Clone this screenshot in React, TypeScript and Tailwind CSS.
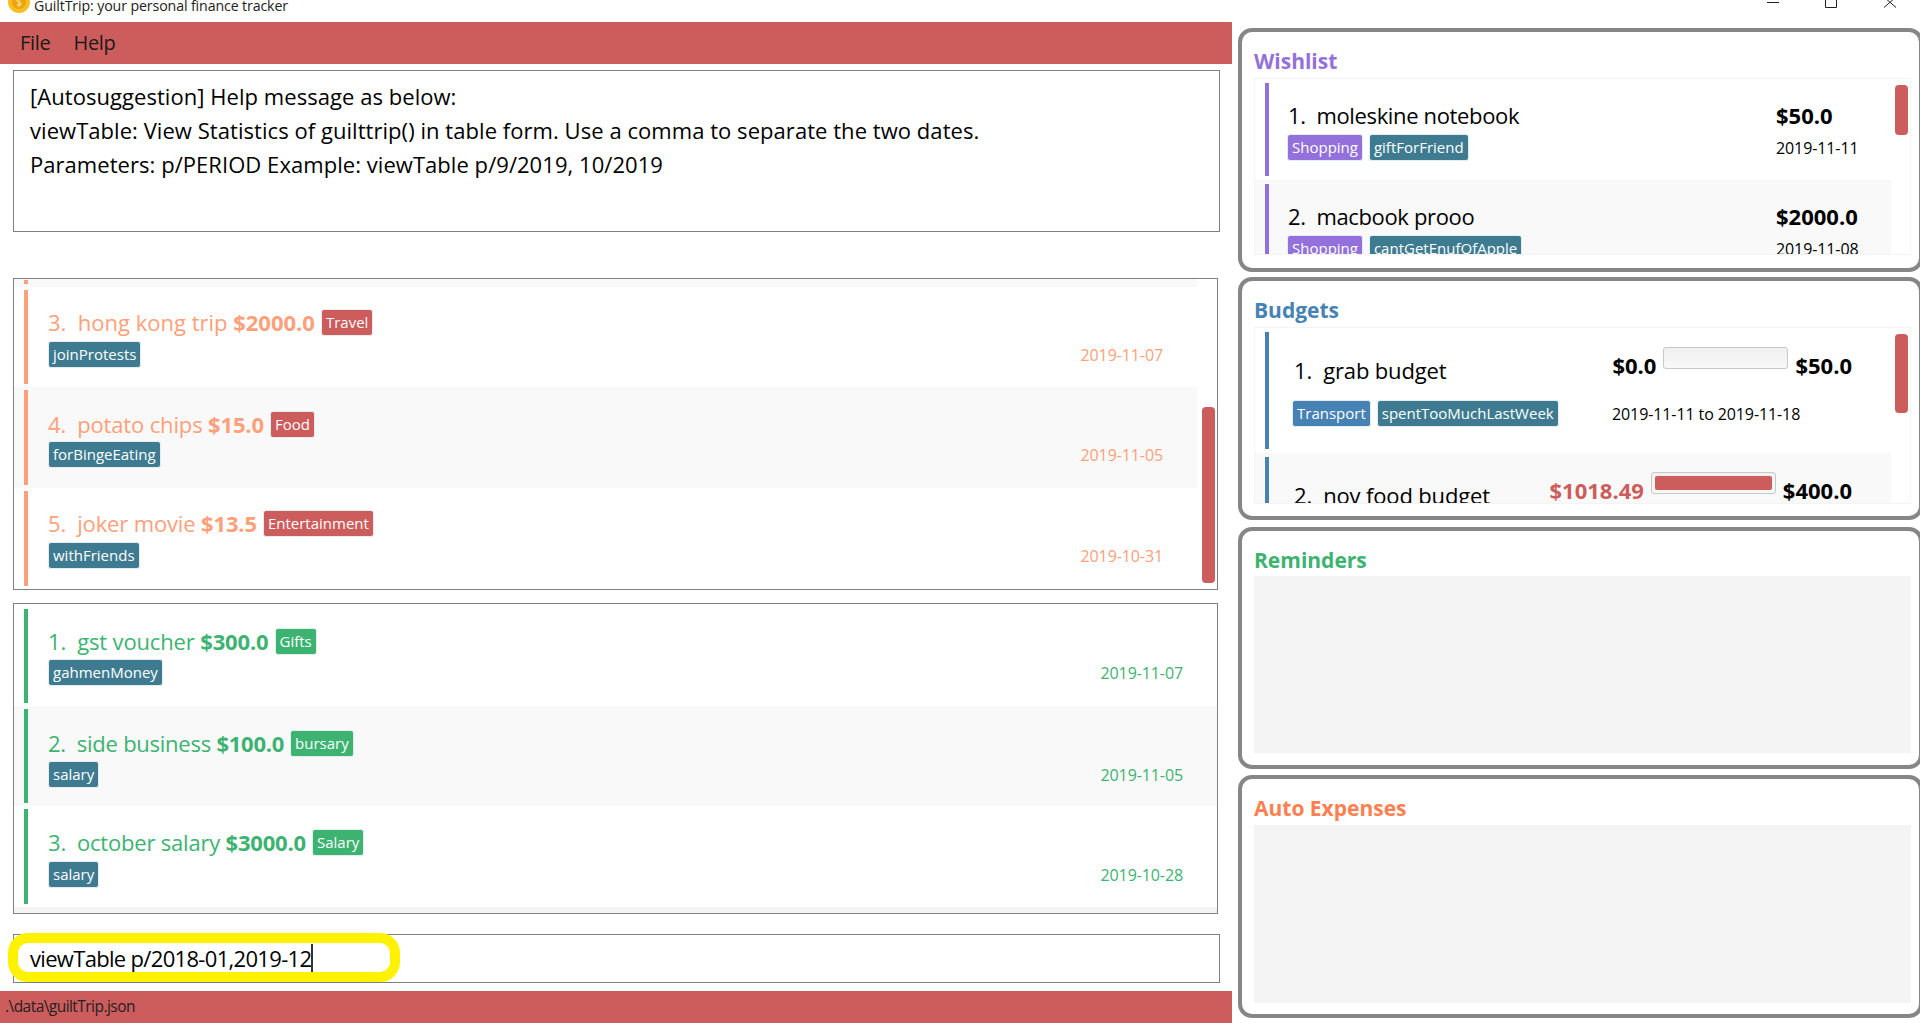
import React from "react";

const FONT = "font-['Open_Sans','Noto_Sans',sans-serif]";

function Tag({ text, color = "bg-[#3e7b91]" }: { text: string; color?: string }) {
  return (
    <span className={`${color} inline-flex h-[27px] items-center rounded-[3px] border border-[#e4edf0] px-[4px] text-[15px] whitespace-nowrap text-white`}>
      {text}
    </span>
  );
}

type TxProps = {
  n: string; name: string; price: string; cat: string; catColor: string; tag: string; date: string;
  text: string; bar: string; alt?: boolean; h: string; pt: string; mt: string; track?: string;
};

function TxRow({ n, name, price, cat, catColor, tag, date, text, bar, alt, h, pt, mt, track = "" }: TxProps) {
  return (
    <div className={`flex ${h} ${alt ? "bg-[#f9f9f9]" : "bg-white"} ${text}`}>
      <div className={`${bar} my-[3px] ml-[10px] w-[4px]`} />
      <div className={`ml-[20px] flex flex-1 flex-col pr-[34px] ${pt}`}>
        <div className="flex h-[30px] items-center gap-[6px]">
          <span className={`text-[22px] whitespace-pre ${track}`}>{n}.  {name} <b>{price}</b></span>
          <Tag text={cat} color={catColor} />
        </div>
        <div className={`flex items-center justify-between ${mt}`}>
          <Tag text={tag} />
          <span className="text-[16px] tracking-[-0.1px]">{date}</span>
        </div>
      </div>
    </div>
  );
}

function Panel({ title, color, className, children }: { title: string; color: string; className: string; children: React.ReactNode }) {
  return (
    <section className={`flex w-[685px] flex-col rounded-[14px] border-4 border-[#868686] bg-white pr-[8px] pl-[12px] ${className}`}>
      <h2 className={`mt-[15px] h-[28px] text-[21px] leading-[28px] font-bold ${color}`}>{title}</h2>
      {children}
    </section>
  );
}

function Thumb({ className }: { className: string }) {
  return <div className={`absolute rounded-[4px] bg-[#cd5c5c] ${className}`} />;
}

function WishRow({ n, name, price, tag, date, alt }: { n: string; name: string; price: string; tag: string; date: string; alt?: boolean }) {
  return (
    <div className={`flex h-[101px] shrink-0 ${alt ? "bg-[#f9f9f9]" : "bg-white"}`}>
      <div className="my-[4px] ml-[10px] w-[4px] bg-[#9370db]" />
      <div className="ml-[19px] flex flex-1 flex-col pt-[21px] pr-[31px]">
        <div className="flex h-[30px] items-center justify-between text-[22px]">
          <span className="tracking-[-0.35px] whitespace-pre">{n}.  {name}</span>
          <b className="w-[84px] whitespace-nowrap">{price}</b>
        </div>
        <div className="mt-[4px] flex items-center justify-between">
          <div className="-ml-[1px] flex gap-[6px]">
            <Tag text="Shopping" color="bg-[#9370db]" />
            <Tag text={tag} />
          </div>
          <span className="w-[84px] text-[16px] tracking-[-0.1px] whitespace-nowrap">{date}</span>
        </div>
      </div>
    </div>
  );
}

function Progress({ fill }: { fill?: boolean }) {
  return (
    <div className="h-[22px] w-[125px] rounded-[3px] border border-[#c8c8c8] bg-gradient-to-b from-[#f0f0f0] to-[#f8f8f8] p-[3px]">
      {fill && <div className="h-full w-full rounded-[2px] bg-[#cd5c5c]" />}
    </div>
  );
}

export default function App() {
  const expense = { text: "text-[#ffa07a]", bar: "bg-[#ffa07a]", catColor: "bg-[#cd5c5c]" };
  const income = { text: "text-[#3cb371]", bar: "bg-[#3cb371]", catColor: "bg-[#3cb371]" };
  const tight = "tracking-[-0.15px]";
  return (
    <div className={`h-[1023px] w-[1920px] overflow-hidden bg-white text-black ${FONT}`}>
      <header className="relative flex h-[22px] items-center overflow-hidden">
        <svg viewBox="0 0 20 20" className="absolute top-[-9px] left-[8px] h-[22px] w-[22px]">
          <circle cx="10" cy="10" r="10" fill="#f8bd22" />
          <circle cx="10" cy="10" r="6.5" fill="#eda410" />
          <path d="M10 5.5v9M12 8c-1-1-4-1-4 .7s4 1 4 2.8-3 1.600-4 .6" fill="none" stroke="#fbe08a" strokeWidth="1" />
        </svg>
        <span className="absolute top-[-5px] left-[34px] text-[14.2px] tracking-[-0.12px] whitespace-nowrap text-[#222]">GuiltTrip: your personal finance tracker</span>
        <svg viewBox="0 0 140 12" className="absolute top-[-3px] left-[1765px] h-[12px] w-[140px]" fill="none" stroke="#222" strokeWidth="1">
          <path d="M2 5.500h12" />
          <path d="M60.500 0v10.500h11V0" />
          <path d="M119 0l12 10.500M131 0l-12 10.500" />
        </svg>
      </header>

      <div className="flex h-[1001px]">
        <div className="flex h-full w-[1232px] shrink-0 flex-col">
          <nav className="flex h-[42px] items-center gap-[23px] bg-[#cd5c5c] pl-[20px] text-[20px] tracking-[-0.3px] text-[#1a1a1a]">
            <span>File</span>
            <span>Help</span>
          </nav>

          <div className="mt-[6px] ml-[13px] h-[162px] w-[1207px] border border-[#808080] pt-[8px] pl-[16px] text-[22px] leading-[34px] tracking-[0.05px]">
            <div>[Autosuggestion] Help message as below:</div>
            <div>viewTable: View Statistics of guilttrip() in table form. Use a comma to separate the two dates.</div>
            <div>Parameters: p/PERIOD Example: viewTable p/9/2019, 10/2019</div>
          </div>

          <div className="relative mt-[46px] ml-[13px] h-[312px] w-[1205px] overflow-hidden border border-[#808080]">
            <div className="mr-[20px]">
              <div className="flex h-[8px] bg-[#f9f9f9]">
                <div className="mt-[1px] ml-[10px] h-[4px] w-[4px] bg-[#ffa07a]" />
              </div>
              <TxRow {...expense} n="3" name="hong kong trip" price="$2000.0" cat="Travel" tag="joinProtests" date="2019-11-07" h="h-[100px]" pt="pt-[20px]" mt="mt-[4px]" />
              <TxRow {...expense} n="4" name="potato chips" price="$15.0" cat="Food" tag="forBingeEating" date="2019-11-05" alt h="h-[101px]" pt="pt-[22px]" mt="mt-[2px]" track={tight} />
              <TxRow {...expense} n="5" name="joker movie" price="$13.5" cat="Entertainment" tag="withFriends" date="2019-10-31" h="h-[101px]" pt="pt-[20px]" mt="mt-[4px]" track={tight} />
            </div>
            <Thumb className="top-[128px] right-[2px] h-[176px] w-[13px]" />
          </div>

          <div className="mt-[13px] ml-[13px] h-[311px] w-[1205px] overflow-hidden border border-[#808080] bg-[#f4f4f4]">
            <div className="h-[2px] bg-white" />
            <TxRow {...income} n="1" name="gst voucher" price="$300.0" cat="Gifts" tag="gahmenMoney" date="2019-11-07" h="h-[100px]" pt="pt-[20px]" mt="mt-[3px]" track={tight} />
            <TxRow {...income} n="2" name="side business" price="$100.0" cat="bursary" tag="salary" date="2019-11-05" alt h="h-[100px]" pt="pt-[22px]" mt="mt-[3px]" track="tracking-[-0.25px]" />
            <TxRow {...income} n="3" name="october salary" price="$3000.0" cat="Salary" tag="salary" date="2019-10-28" h="h-[101px]" pt="pt-[21px]" mt="mt-[4px]" track="tracking-[-0.2px]" />
          </div>

          <div className="relative mt-[20px] ml-[13px] flex h-[49px] w-[1207px] items-center border border-[#808080] pl-[16px] text-[22px] tracking-[-0.68px]">
            <span>viewTable p/2018-01,2019-12</span>
            <span className="ml-[0px] h-[29px] w-[2px] bg-[#333]" />
            <div className="absolute top-[-2px] left-[-6px] h-[49px] w-[392px] rounded-[20px] border-[10px] border-[#fff200]" />
          </div>

          <footer className="mt-[8px] flex h-[32px] items-center bg-[#cd5c5c] pl-[5px] text-[15.500px] tracking-[-0.55px] text-[#222]">.\data\guiltTrip.json</footer>
        </div>

        <div className="flex flex-col pt-[6px] pl-[6px]">
          <Panel title="Wishlist" color="text-[#9370db]" className="h-[244px]">
            <div className="relative mt-[3px] h-[177px] w-[657px] overflow-hidden border border-[#f4f4f4]">
              <div className="mr-[19px]">
                <WishRow n="1" name="moleskine notebook" price="$50.0" tag="giftForFriend" date="2019-11-11" />
                <WishRow n="2" name="macbook prooo" price="$2000.0" tag="cantGetEnufOfApple" date="2019-11-08" alt />
              </div>
              <Thumb className="top-[6px] right-[2px] h-[50px] w-[13px]" />
            </div>
          </Panel>

          <Panel title="Budgets" color="text-[#4682b4]" className="mt-[5px] h-[243px]">
            <div className="relative mt-[3px] h-[177px] w-[657px] overflow-hidden border border-[#f4f4f4]">
              <div className="mr-[19px]">
                <div className="flex h-[125px] bg-white">
                  <div className="my-[4px] ml-[10px] w-[4px] bg-[#4682b4]" />
                  <div className="ml-[25px] flex flex-1 flex-col pt-[19px] pr-[39px]">
                    <div className="flex h-[44px] items-start justify-between">
                      <span className="pt-[8px] text-[22px] leading-[30px] tracking-[-0.15px] whitespace-pre">1.  grab budget</span>
                      <div className="flex gap-[7px] text-[22px] leading-[30px] font-bold">
                        <span className="pt-[3px]">$0.0</span>
                        <Progress />
                        <span className="pt-[3px]">$50.0</span>
                      </div>
                    </div>
                    <div className="mt-[9px] flex items-center justify-between">
                      <div className="-ml-[2px] flex gap-[6px]">
                        <Tag text="Transport" color="bg-[#4682b4]" />
                        <Tag text="spentTooMuchLastWeek" />
                      </div>
                      <span className="w-[240px] text-[16px] tracking-[-0.1px]">2019-11-11 to 2019-11-18</span>
                    </div>
                  </div>
                </div>
                <div className="flex h-[125px] bg-[#f9f9f9]">
                  <div className="my-[4px] ml-[10px] w-[4px] bg-[#4682b4]" />
                  <div className="ml-[25px] flex flex-1 items-start justify-between pt-[19px] pr-[39px]">
                    <span className="pt-[8px] text-[22px] leading-[30px] tracking-[-0.15px] whitespace-pre">2.  nov food budget</span>
                    <div className="flex gap-[7px] text-[22px] leading-[30px] font-bold">
                      <span className="pt-[3px] text-[#cd5c5c]">$1018.49</span>
                      <Progress fill />
                      <span className="pt-[3px]">$400.0</span>
                    </div>
                  </div>
                </div>
              </div>
              <Thumb className="top-[6px] right-[2px] h-[79px] w-[13px]" />
            </div>
          </Panel>

          <Panel title="Reminders" color="text-[#3cb371]" className="mt-[7px] h-[242px]">
            <div className="mt-[2px] h-[177px] w-[657px] bg-[#f4f4f4]" />
          </Panel>

          <Panel title="Auto Expenses" color="text-[#ff7f50]" className="mt-[6px] h-[243px]">
            <div className="mt-[3px] h-[178px] w-[657px] bg-[#f4f4f4]" />
          </Panel>
        </div>
      </div>
    </div>
  );
}
